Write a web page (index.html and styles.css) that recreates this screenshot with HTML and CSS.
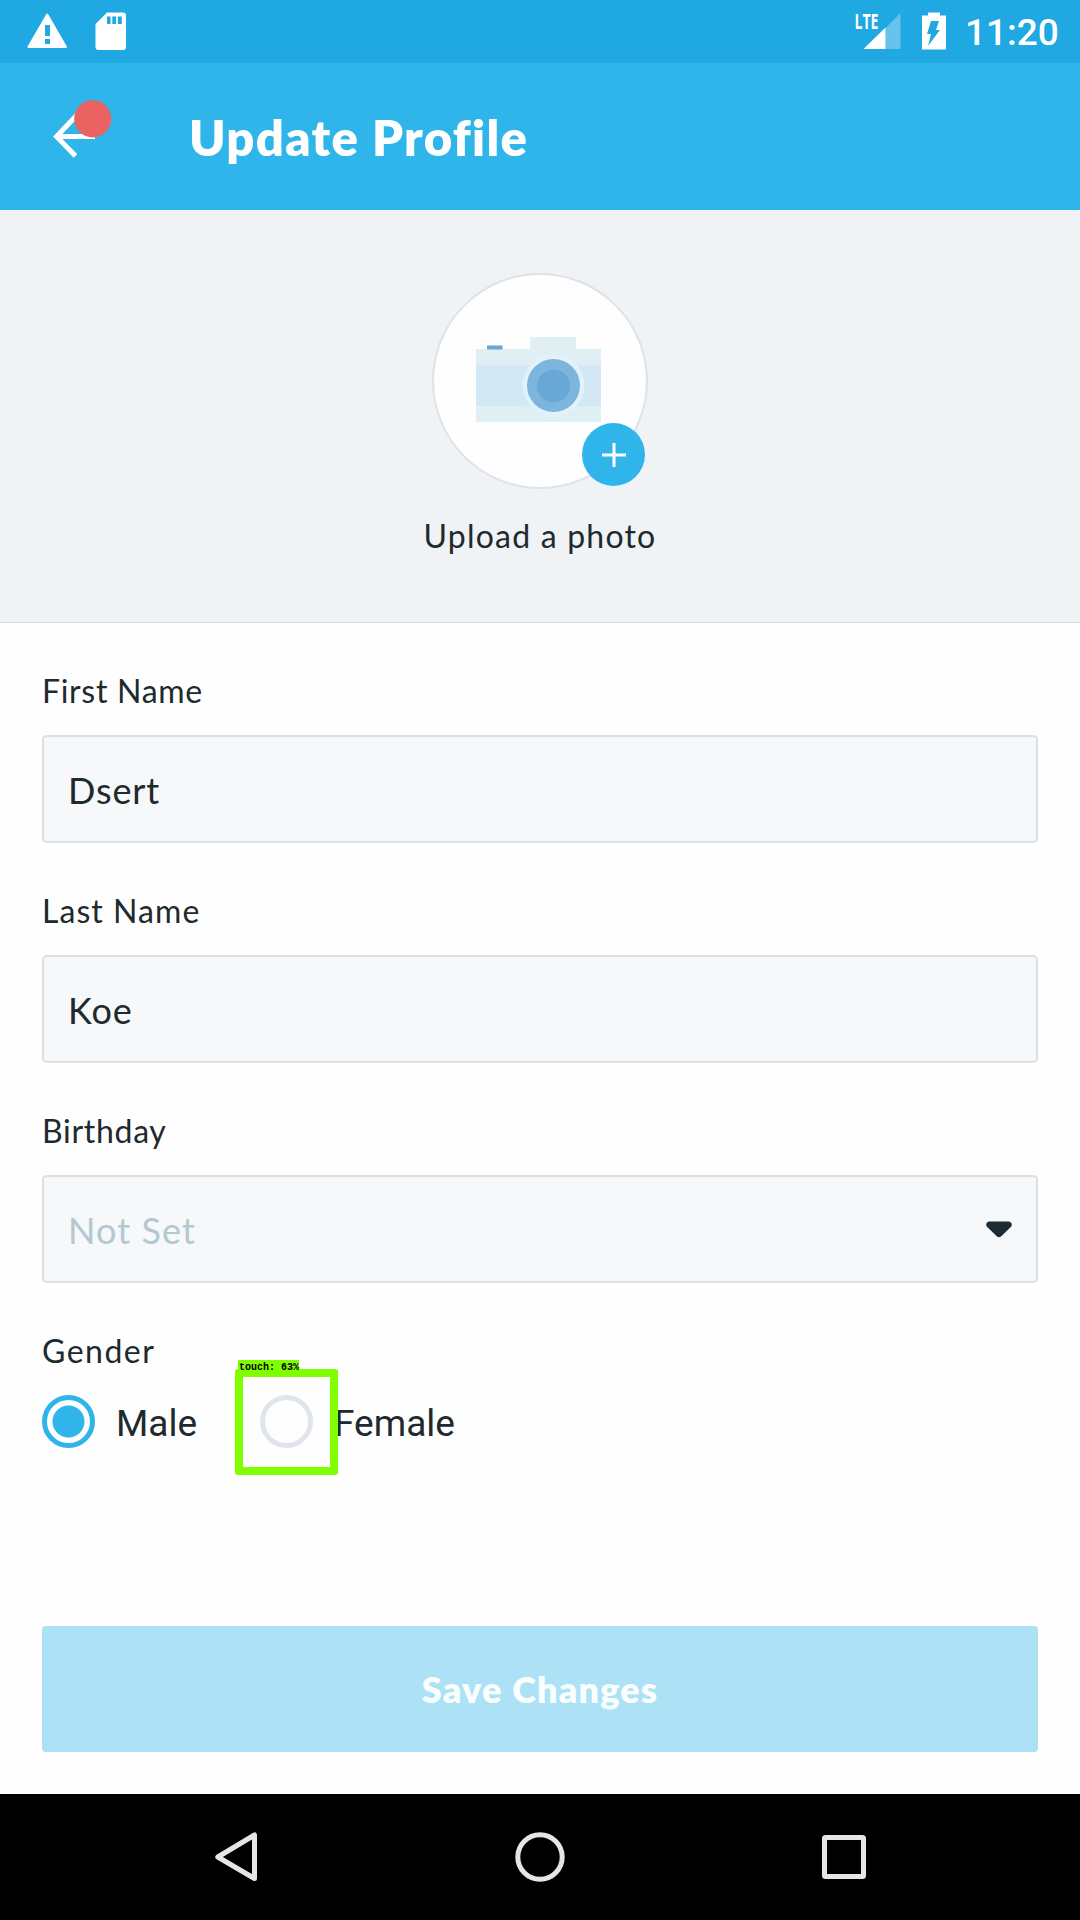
FILE: index.html
```html
<!DOCTYPE html>
<html lang="en">
<head>
<meta charset="utf-8">
<title>Update Profile</title>
<link rel="stylesheet" href="styles.css">
</head>
<body>
<div class="screen">
  <div class="status-bar">
    <svg class="status-left" width="140" height="63" viewBox="0 0 140 63">
      <path d="M47.2 14.5 66 47H28.400Z" fill="#fff" stroke="#fff" stroke-width="2" stroke-linejoin="round"/>
      <path d="M45 25h5v11h-5zM45 39h5v5h-5z" fill="#1fa8e2"/>
      <path d="M107 12.500h16a3 3 0 0 1 3 3V47a3 3 0 0 1-3 3H98.500a3 3 0 0 1-3-3V24z" fill="#fff"/>
      <path d="M107 16.500h3.500v7.500H107zM112.300 16.500h3.700v7.500h-3.700zM117.800 16.500h4v7.500h-4z" fill="#1fa8e2"/>
    </svg>
    <svg class="status-signal" width="100" height="63" viewBox="850 0 100 63">
      <text class="lte" x="854.500" y="29" textLength="24" lengthAdjust="spacingAndGlyphs">LTE</text>
      <path d="M885.500 28 900.500 13V49H885.500z" fill="#67c3ec"/>
      <path d="M863.500 49 885.500 27.500V49z" fill="#fff"/>
      <path d="M928 12.500h12v3h6V49.500h-24v-34h6z" fill="#fff"/>
      <path d="M931 21h8l-3 9h4l-12 16 3-12h-4z" fill="#1fa8e2"/>
    </svg>
    <span class="clock">11:20</span>
  </div>

  <header class="app-bar">
    <div class="back">
      <svg width="70" height="70" viewBox="45 95 70 70">
        <path d="M77.500 114.500 56.500 136.500 75.500 156M57 136.500H95" fill="none" stroke="#fff" stroke-width="5"/>
        <circle cx="92.700" cy="118.800" r="18.600" fill="#eb6262"/>
      </svg>
    </div>
    <h1 class="title">Update Profile</h1>
  </header>

  <section class="photo">
    <div class="avatar">
      <svg width="126" height="86" viewBox="0 0 126 86">
        <path d="M0 12h54V0h46v12h25v73H0z" fill="#e0eff4"/>
        <path d="M0 28h125v41H0z" fill="#d2e8f5"/>
        <path d="M11 8.500h15.500v4H11z" fill="#69a6d5"/>
        <circle cx="77.500" cy="48.500" r="31" fill="#e2f2fa"/>
        <path d="M54 12h46v6H54z" fill="#e0eff4"/>
        <circle cx="77.500" cy="48.500" r="26.500" fill="#7cb6de"/>
        <circle cx="77.500" cy="49" r="16.500" fill="#69a7d6"/>
      </svg>
      <div class="add">
        <svg width="24" height="24" viewBox="0 0 24 24"><path d="M12 0v24M0 12h24" stroke="#fff" stroke-width="3"/></svg>
      </div>
    </div>
    <div class="upload">Upload a photo</div>
  </section>

  <main class="form">
    <div class="field">
      <div class="label first">First Name</div>
      <div class="input"><span>Dsert</span></div>
    </div>
    <div class="field">
      <div class="label last">Last Name</div>
      <div class="input"><span>Koe</span></div>
    </div>
    <div class="field">
      <div class="label birthday">Birthday</div>
      <div class="input"><span class="placeholder">Not Set</span>
        <svg class="caret" width="26" height="17" viewBox="0 0 26 17"><path d="M3 0.500h20q2.800 0.500 2.800 3.500 0 1-1 2L15 15.500q-2 1.500-4 0L1.200 6q-1-1-1-2 0-3 2.800-3.500z" fill="#1b2a33"/></svg>
      </div>
    </div>
    <div class="gender">
      <div class="label sex">Gender</div>
      <div class="options">
        <span class="radio checked"></span><span class="opt">Male</span>
        <span class="radio second"><span class="touch"><span class="touch-label">touch: 63%</span></span></span><span class="opt">Female</span>
      </div>
    </div>
    <div class="save">Save Changes</div>
  </main>

  <nav class="nav-bar">
    <svg width="1080" height="126" viewBox="0 1794 1080 126" fill="none" stroke="#e6e6e6" stroke-width="5" stroke-linejoin="round">
      <path d="M254.500 1835V1878.500L217.800 1857z"/>
      <circle cx="540" cy="1857" r="22.200"/>
      <rect x="824.500" y="1837.500" width="39" height="39" rx="1"/>
    </svg>
  </nav>
</div>
</body>
</html>
```
FILE: styles.css
```css
* { box-sizing: border-box; }
body { margin: 0; }
.screen {
  width: 1080px; height: 1920px; display: flex; flex-direction: column;
  background: #fefefe; color: #20292d; overflow: hidden;
  font-family: Lato, "Open Sans", sans-serif;
}
svg { display: block; flex: none; }

.status-bar { height: 63px; display: flex; background: #1fa8e2; color: #fff; }
.status-signal { margin-left: 710px; }
.lte { font: 700 22px "Open Sans", sans-serif; fill: #fff; }
.clock { margin-left: 15px; font: 500 37px/66px Roboto, sans-serif; white-space: nowrap; }

.app-bar { height: 147px; display: flex; background: #30b5eb; color: #fff; }
.back { padding: 32px 0 0 45px; }
.title { margin: 0 0 0 74px; padding-top: 44px; font-size: 49px; line-height: 60px; font-weight: 800; letter-spacing: 1.35px; white-space: nowrap; }

.photo {
  height: 413px; padding-top: 63px; display: flex; flex-direction: column; align-items: center;
  background: #eff3f6; border-bottom: 1px solid #d5e0e5;
}
.avatar {
  position: relative; width: 216px; height: 216px; padding: 62px 0 0 42px;
  border: 2px solid #dee3e8; border-radius: 50%; background: #fefefe;
}
.add {
  position: absolute; left: 148px; top: 148px; width: 63px; height: 63px;
  display: grid; place-items: center; border-radius: 50%; background: #30b5eb;
}
.upload { margin-top: 23px; font-size: 32px; line-height: 48px; letter-spacing: 1.2px; white-space: nowrap; }

.form { height: 1171px; padding: 43px 42px 0; }
.field { margin-bottom: 43px; }
.label { height: 48px; font-size: 32px; line-height: 50px; white-space: nowrap; }
.first { letter-spacing: 0.7px; }
.last { letter-spacing: 1.05px; }
.birthday { letter-spacing: 0.7px; }
.sex { letter-spacing: 1.5px; }
.input {
  height: 108px; margin-top: 21px; padding: 2px 24px 0 24px; display: flex; align-items: center;
  justify-content: space-between; border: 2px solid #dae1e6; border-radius: 5px;
  background: #f6f8fa; font-size: 36px; line-height: 44px; letter-spacing: 0.9px;
}
.caret { margin-bottom: 2px; }
.placeholder { color: #b3c8d1; letter-spacing: 1.1px; }
.options { height: 53px; margin-top: 21px; display: flex; align-items: center; font: 400 37px/53px Roboto, sans-serif; }
.radio { position: relative; flex: none; width: 53px; height: 53px; border: 5px solid #dfe5ea; border-radius: 50%; }
.checked { border-color: #30b5eb; background: radial-gradient(circle, #30b5eb 15.5px, transparent 16.500px); }
.opt { margin-left: 21px; padding-top: 3px; width: 97px; }
.second { margin-left: 47px; }
.touch { position: absolute; z-index: 1; left: -30px; top: -31px; width: 103px; height: 106px; border: 8px solid #80ff00; border-radius: 3px; }
.touch-label {
  position: absolute; left: -5px; top: -17px; width: 61px; height: 11px; padding-left: 1px;
  background: #80ff00; color: #000; font: 700 10px/15px "Liberation Mono", monospace; white-space: nowrap;
}
.save {
  height: 126px; margin-top: 178px; display: grid; place-items: center; border-radius: 4px;
  background: #ade2f6; color: #fafeff; font-size: 36px; font-weight: 800; letter-spacing: 1.2px;
}
.nav-bar { height: 126px; background: #000; }
```
